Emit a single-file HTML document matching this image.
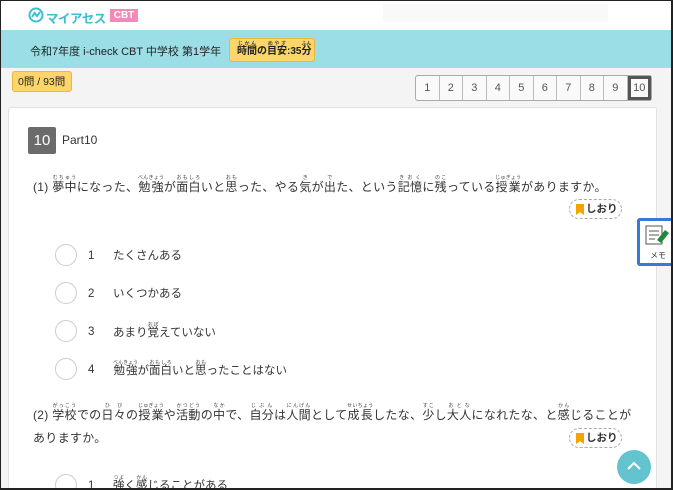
<!DOCTYPE html>
<html><head><meta charset="utf-8"><style>
*{margin:0;padding:0;box-sizing:border-box}
html,body{width:673px;height:490px;overflow:hidden}
body{position:relative;background:#f4f4f4;font-family:"Liberation Sans","Noto Sans CJK JP",sans-serif;color:#333;white-space:nowrap}
.frame{position:absolute;left:0;top:0;width:673px;height:490px;border:1px solid #222;border-right-width:2px;border-bottom-width:2px;pointer-events:none;z-index:20}
.hdr{position:absolute;left:0;top:0;width:673px;height:30px;background:#fff}
.band{position:absolute;left:0;top:30px;width:673px;height:38px;background:#9bdee6}
.ab{position:absolute}
ruby rt{font-size:5px;color:#444}
.yel{background:#fcd66a;border:1px solid #e8b93e;border-radius:3px}
.pg{position:absolute;left:415px;top:75px;display:flex;border:1px solid #aaa;border-radius:3px;background:#fafafa}
.pg div{width:23.5px;height:24px;border-right:1px solid #bbb;text-align:center;line-height:24px;font-size:11px;color:#555}
.pg div:last-child{border:3px solid #555;line-height:18px;border-right:3px solid #555}
.card{position:absolute;left:8px;top:107px;width:649px;height:383px;background:#fff;border:1px solid #e2e2e2;border-radius:3px}
.q{font-size:12px;color:#333;line-height:23px;white-space:normal;letter-spacing:0.3px}
.circ{position:absolute;width:22px;height:22px;border:1px solid #ccc;border-radius:50%;background:#fff}
.opt{position:absolute;font-size:11.5px;line-height:14px}
.shi{position:absolute;width:53px;height:20px;border:1px dashed #aaa;border-radius:10px;font-size:10.5px;font-weight:bold;line-height:18px;padding-left:16px;background:#fff}
.shi:before{content:"";position:absolute;left:6px;top:4px;width:8px;height:11px;background:#f5a300;clip-path:polygon(0 0,100% 0,100% 100%,50% 75%,0 100%)}
</style></head><body>
<div class="hdr"></div>
<div class="ab" style="left:383px;top:4px;width:225px;height:18px;background:#f9f9f9"></div>
<svg class="ab" style="left:28px;top:7px" width="16" height="16" viewBox="0 0 16 16"><circle cx="8" cy="8" r="6.5" fill="none" stroke="#3bbfcf" stroke-width="2"/><path d="M4 10 L6.5 6 L9 9 L12 5" fill="none" stroke="#3bbfcf" stroke-width="2"/></svg>
<div class="ab" style="left:46px;top:8px;font-size:12.5px;font-weight:bold;color:#3bbfcf;letter-spacing:-0.5px">マイアセス</div>
<div class="ab" style="left:110px;top:9px;width:28px;height:13px;background:#f08bb8;color:#fff;font-size:10px;font-weight:bold;text-align:center;line-height:13px">CBT</div>
<div class="band"></div>
<div class="ab" style="left:30px;top:43px;font-size:11px;color:#222">令和7年度 i-check CBT 中学校 第1学年</div>
<div class="ab yel" style="left:229px;top:38px;width:86px;height:24px;font-size:10px;font-weight:bold;padding:5px 0 0 7px;line-height:16px;color:#222"><ruby>時間<rt>じかん</rt></ruby>の<ruby>目安<rt>めやす</rt></ruby>:35<ruby>分<rt>ふん</rt></ruby></div>
<div class="ab yel" style="left:12px;top:71px;width:60px;height:21px;font-size:10.5px;line-height:20px;padding-left:5px;color:#222">0問 / 93問</div>
<div class="pg"><div>1</div><div>2</div><div>3</div><div>4</div><div>5</div><div>6</div><div>7</div><div>8</div><div>9</div><div>10</div></div>
<div class="card"></div>
<div class="ab" style="left:28px;top:127px;width:28px;height:27px;background:#6b6b6b;color:#fff;font-size:15px;text-align:center;line-height:27px;border-radius:2px">10</div>
<div class="ab" style="left:62px;top:133px;font-size:12px">Part10</div>
<div class="ab q" style="left:33px;top:175px;width:600px">(1) <ruby>夢中<rt>むちゅう</rt></ruby>になった、<ruby>勉強<rt>べんきょう</rt></ruby>が<ruby>面白<rt>おもしろ</rt></ruby>いと<ruby>思<rt>おも</rt></ruby>った、やる<ruby>気<rt>き</rt></ruby>が<ruby>出<rt>で</rt></ruby>た、という<ruby>記憶<rt>きおく</rt></ruby>に<ruby>残<rt>のこ</rt></ruby>っている<ruby>授業<rt>じゅぎょう</rt></ruby>がありますか。</div>
<div class="shi" style="left:569px;top:199px">しおり</div>
<div class="ab" style="left:637px;top:218px;width:40px;height:48px;background:#fff;border:3px solid #3a78d8;border-right:none;border-radius:3px 0 0 3px"></div>
<svg class="ab" style="left:645px;top:224px" width="26" height="22" viewBox="0 0 26 22"><rect x="1" y="2" width="16" height="18" fill="#fff" stroke="#555"/><path d="M4 7h10M4 11h10M4 15h6" stroke="#555"/><path d="M12 16 L20 6 L24 9 L16 19 Z" fill="#1f8a3a"/></svg>
<div class="ab" style="left:650px;top:250px;font-size:8px">メモ</div>
<div class="circ" style="left:55px;top:244px"></div><div class="opt" style="left:88px;top:249px">1</div><div class="opt" style="left:113px;top:249px">たくさんある</div>
<div class="circ" style="left:55px;top:282px"></div><div class="opt" style="left:88px;top:287px">2</div><div class="opt" style="left:113px;top:287px">いくつかある</div>
<div class="circ" style="left:55px;top:320px"></div><div class="opt" style="left:88px;top:325px">3</div><div class="opt" style="left:113px;top:322px">あまり<ruby>覚<rt>おぼ</rt></ruby>えていない</div>
<div class="circ" style="left:55px;top:358px"></div><div class="opt" style="left:88px;top:363px">4</div><div class="opt" style="left:113px;top:360px"><ruby>勉強<rt>べんきょう</rt></ruby>が<ruby>面白<rt>おもしろ</rt></ruby>いと<ruby>思<rt>おも</rt></ruby>ったことはない</div>
<div class="ab q" style="left:33px;top:403px;width:600px">(2) <ruby>学校<rt>がっこう</rt></ruby>での<ruby>日々<rt>ひび</rt></ruby>の<ruby>授業<rt>じゅぎょう</rt></ruby>や<ruby>活動<rt>かつどう</rt></ruby>の<ruby>中<rt>なか</rt></ruby>で、<ruby>自分<rt>じぶん</rt></ruby>は<ruby>人間<rt>にんげん</rt></ruby>として<ruby>成長<rt>せいちょう</rt></ruby>したな、<ruby>少<rt>すこ</rt></ruby>し<ruby>大人<rt>おとな</rt></ruby>になれたな、と<ruby>感<rt>かん</rt></ruby>じることがありますか。</div>
<div class="shi" style="left:569px;top:428px">しおり</div>
<div class="circ" style="left:55px;top:474px"></div><div class="opt" style="left:88px;top:479px">1</div><div class="opt" style="left:113px;top:475px"><ruby>強<rt>つよ</rt></ruby>く<ruby>感<rt>かん</rt></ruby>じることがある</div>
<div class="ab" style="left:617px;top:450px;width:34px;height:34px;border-radius:50%;background:#63c3cf"></div>
<svg class="ab" style="left:625px;top:459px" width="18" height="14"><path d="M3 10 L9 4 L15 10" fill="none" stroke="#fff" stroke-width="2"/></svg>
<div class="frame"></div>
</body></html>
